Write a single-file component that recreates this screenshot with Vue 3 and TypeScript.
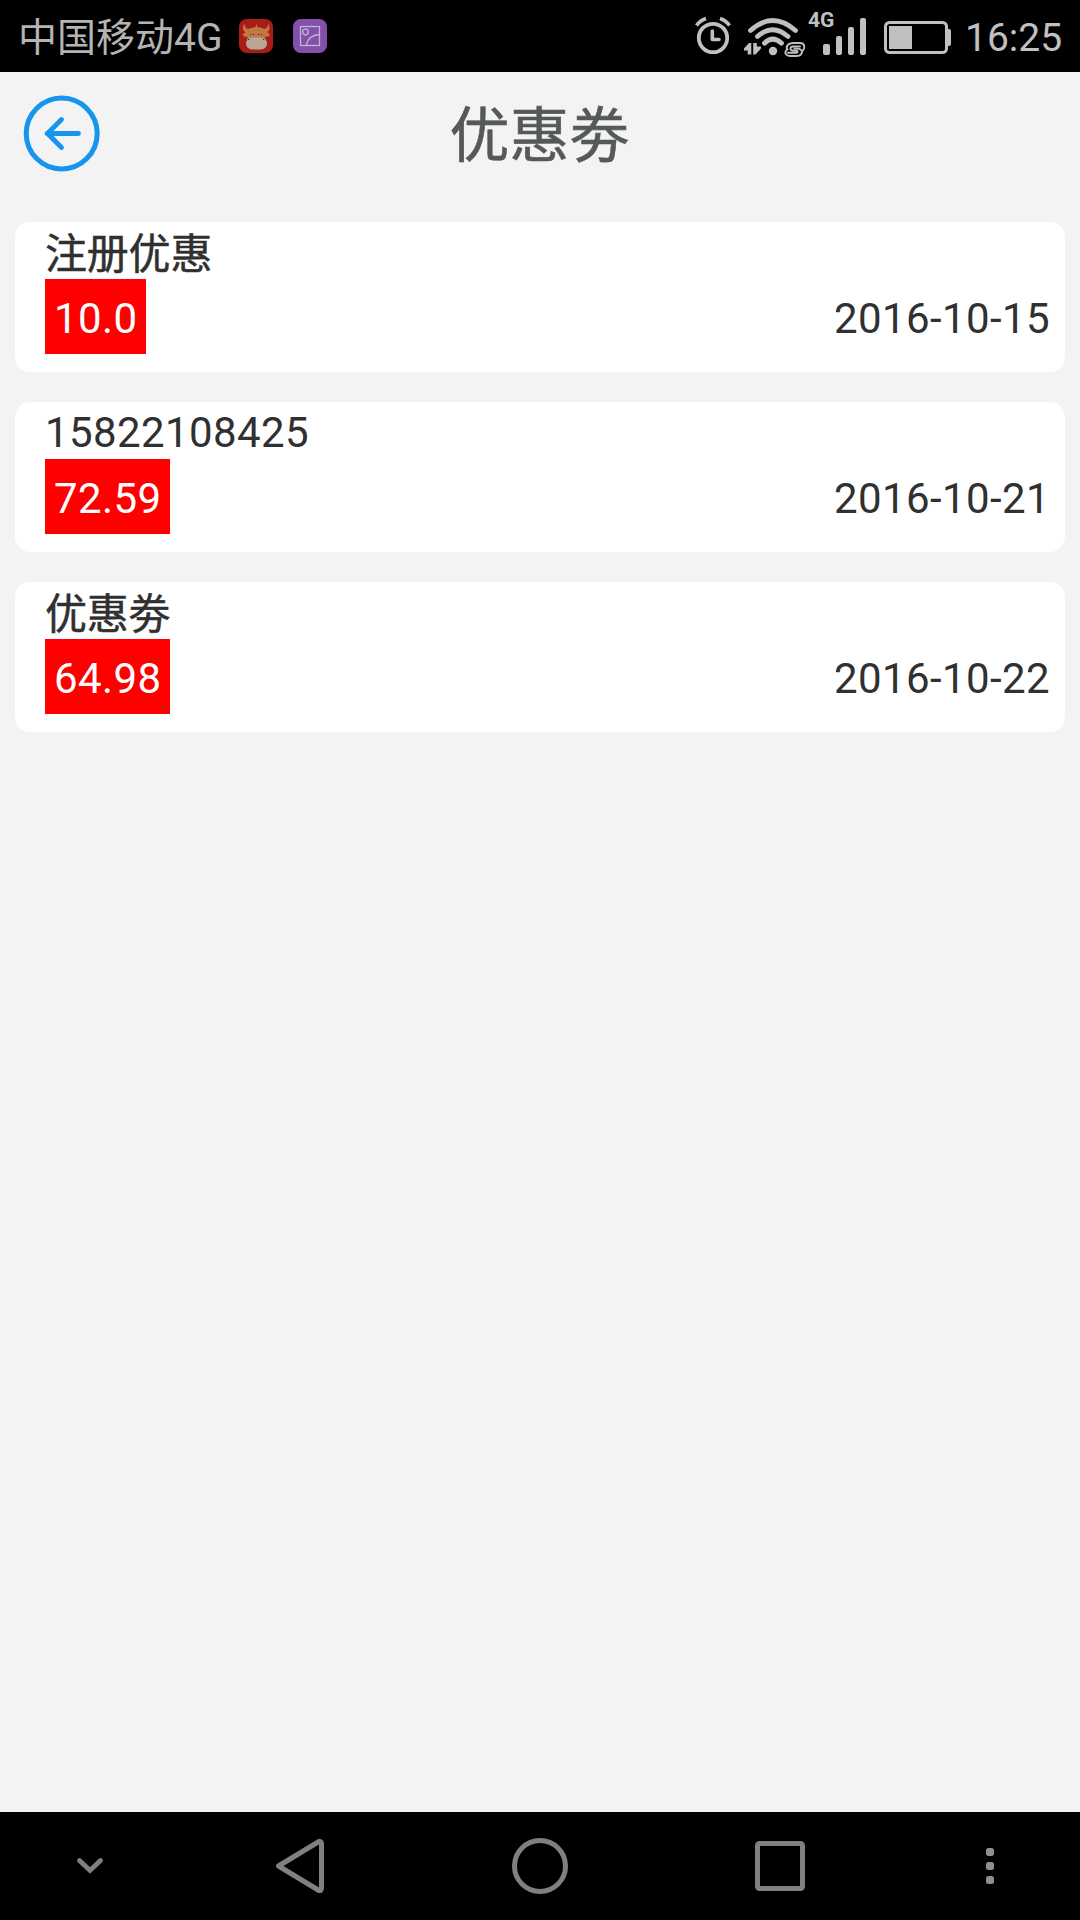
<script setup lang="ts">
interface Coupon {
  title: string
  amount: string
  date: string
}

const coupons: Coupon[] = [
  { title: '注册优惠', amount: '10.0', date: '2016-10-15' },
  { title: '15822108425', amount: '72.59', date: '2016-10-21' },
  { title: '优惠劵', amount: '64.98', date: '2016-10-22' },
]

const isNumeric = (text: string) => /^\d+$/.test(text)
</script>

<template>
  <div class="screen">
    <div class="status">
      <span class="carrier">中国移动4G</span>
      <svg class="app-icon" viewBox="0 0 34 34">
        <rect width="34" height="34" rx="8" fill="#a91d17" />
        <g fill="#c27842">
          <path d="M5.5 4.500C2.500 9 4 13.500 9 14L12 10C7 10.500 5.500 8 5.500 4.500ZM29 4.500C32 9 30.500 13.500 25.500 14L22.500 10C27.500 10.500 29 8 29 4.500Z" />
          <path d="M8 12C9 9 14 8.500 16.500 8L17.300 5L18.500 8C21 8.500 26 9 27 12L31 15.500C29.500 18 28 18 26 17.500L26.500 22H8L8.500 17.500C6.500 18 5 18 3.500 15.500Z" />
        </g>
        <rect x="7" y="18.500" width="21" height="12" rx="6" fill="#b8a797" />
        <path d="M11 15.500h1.300M14 15.500h1.300M19 15.500h1.300M22 15.500h1.300M9 20.500h1.200M24 20.500h1.200" stroke="#4a2c1c" stroke-width="1.200" />
      </svg>
      <svg class="app-icon second" viewBox="0 0 34 34">
        <rect width="34" height="34" rx="8" fill="#8350ab" />
        <g fill="none" stroke="#c4b3d2" stroke-width="1.300">
          <rect x="7.500" y="7.500" width="19" height="19" />
          <circle cx="12.500" cy="13" r="2.800" />
          <path d="M13.500 26C14.500 20 19 16 26.500 15.500" />
        </g>
      </svg>
      <div class="spacer"></div>
      <svg class="alarm" width="37" height="72" viewBox="0 0 37 72">
        <g fill="none" stroke="#c0c0c0">
          <circle cx="18" cy="38" r="14.200" stroke-width="3.800" />
          <path d="M17.300 31V39.500H24" stroke-width="3.600" stroke-linejoin="round" stroke-linecap="round" />
          <path d="M1.500 25.500Q5 20.500 11 18.500M25 18.500Q31 20.500 34.500 25.500" stroke-width="3.600" />
        </g>
      </svg>
      <svg class="wifi" width="63" height="72" viewBox="0 0 63 72">
        <g fill="none" stroke="#c0c0c0" stroke-width="4.800" stroke-linecap="round">
          <path d="M7.500 30.500Q29.500 10.500 52.500 30.500" />
          <path d="M14.500 36.500Q29.500 23 45 36.500" />
          <path d="M21.500 43.200Q29.500 35 38.500 43.200" />
        </g>
        <circle cx="30" cy="51" r="4.200" fill="#c0c0c0" />
        <path d="M1 48.500L6 43H8.300V54.500H4.700V50.500H1ZM10.200 43H13.800V46.500H18V48.500L12.500 54.500H10.200Z" fill="#c0c0c0" />
        <!-- linked-loop badge at the foot of the wifi arcs -->
        <g fill="none" stroke="#c0c0c0" stroke-width="1.900" stroke-linecap="round">
          <path d="M57 46.500H50.500C46.500 46.500 46.500 50.500 50 50.500H52C55.500 50.500 55 52.800 52.500 52.800H45" />
          <path d="M60 50.500C62.500 47 61.500 43 57 43H50.500C44.500 43 42.500 47 44.500 49.500" />
          <path d="M43.500 50C41 53 43 56 47 56H53C59.500 56 60 51 57.500 49.500C56 48.500 54 48.800 51.500 48.500" />
        </g>
      </svg>
      <div class="signal">
        <span class="net">4G</span>
        <svg width="44" height="72" viewBox="0 0 44 72" fill="#c0c0c0">
          <rect x="0" y="44" width="7" height="11" rx="2" />
          <rect x="13" y="36" width="6" height="19" rx="2" />
          <rect x="25" y="27" width="6" height="28" rx="2" />
          <rect x="37" y="18" width="6" height="37" rx="2" />
        </svg>
      </div>
      <svg class="battery" width="67" height="72" viewBox="0 0 67 72">
        <rect x="1.500" y="22.500" width="61" height="30" rx="4" fill="none" stroke="#c0c0c0" stroke-width="3" />
        <path d="M64 29H65Q67 29 67 31V44Q67 46 65 46H64Z" fill="#c0c0c0" />
        <rect x="5" y="26" width="23" height="23" fill="#c0c0c0" />
      </svg>
      <span class="time">16:25</span>
    </div>

    <header class="header">
      <svg class="back" width="78" height="78" viewBox="0 0 78 78" fill="none" stroke="#1595ee">
        <circle cx="38.700" cy="38.500" r="35.500" stroke-width="5" />
        <path d="M55.500 38.500H24M38.500 24.500L24.500 38.500L38.500 52.500" stroke-width="4.800" stroke-linecap="round" stroke-linejoin="round" />
      </svg>
      <h1 class="title">优惠劵</h1>
    </header>

    <main class="list">
      <section v-for="coupon in coupons" :key="coupon.date" class="card">
        <p :class="['name', { numeric: isNumeric(coupon.title) }]">{{ coupon.title }}</p>
        <div class="row">
          <span class="amount">{{ coupon.amount }}</span>
          <span class="date">{{ coupon.date }}</span>
        </div>
      </section>
    </main>

    <nav class="nav">
      <svg width="180" height="108" viewBox="0 0 180 108">
        <path d="M79.500 48.500L90 58.500L100.500 48.500" fill="none" stroke="#808080" stroke-width="4.800" stroke-linecap="round" />
      </svg>
      <svg width="240" height="108" viewBox="0 0 240 108">
        <path d="M139 29.500L98.500 54L139 78.500Q141.500 79 141.500 76V32Q141.500 29 139 29.500Z" fill="none" stroke="#808080" stroke-width="5" stroke-linejoin="round" />
      </svg>
      <svg width="240" height="108" viewBox="0 0 240 108">
        <circle cx="120" cy="54" r="25.500" fill="none" stroke="#808080" stroke-width="5" />
      </svg>
      <svg width="240" height="108" viewBox="0 0 240 108">
        <rect x="97.500" y="31.500" width="45" height="45" rx="2" fill="none" stroke="#808080" stroke-width="5" />
      </svg>
      <svg width="180" height="108" viewBox="0 0 180 108" fill="#8f8f8f">
        <rect x="86" y="36" width="8" height="8" rx="2.500" />
        <rect x="86" y="50" width="8" height="8" rx="2.500" />
        <rect x="86" y="64" width="8" height="8" rx="2.500" />
      </svg>
    </nav>
  </div>
</template>

<style>
body {
  margin: 0;
  background: #f3f3f3;
}
</style>

<style scoped>
.screen {
  display: flex;
  flex-direction: column;
  width: 1080px;
  height: 1920px;
  background: #f3f3f3;
  font-family: Roboto, 'Noto Sans CJK SC', sans-serif;
  overflow: hidden;
}

.screen svg {
  display: block;
  flex-shrink: 0;
}

.status {
  display: flex;
  align-items: center;
  height: 72px;
  padding: 0 19px 0 18px;
  background: #000;
  color: #b4b4b4;
  font-size: 39px;
  line-height: 72px;
  white-space: nowrap;
}

.carrier {
  width: 221px;
  padding-top: 4px;
}

.app-icon {
  width: 34px;
  height: 34px;
}

.second {
  margin-left: 20px;
}

.spacer {
  flex: 1;
}

.wifi {
  margin-left: 11px;
}

.signal {
  display: flex;
  width: 59px;
  margin-left: 2px;
}

.net {
  width: 15px;
  padding-top: 9px;
  color: #c0c0c0;
  font-size: 21px;
  font-weight: 700;
  line-height: 22px;
}

.battery {
  margin-left: 17px;
}

.time {
  width: 96px;
  margin-left: 14px;
  padding-top: 4px;
  color: #c0c0c0;
}

.header {
  display: grid;
  grid-template-columns: 100px 1fr 100px;
  align-items: center;
  height: 123px;
  padding: 0 23px;
}

.title {
  margin: 0;
  padding: 6px 1px 0 0;
  color: #555957;
  font-size: 60px;
  font-weight: 400;
  line-height: 80px;
  text-align: center;
  -webkit-text-stroke: 0.6px #555957;
}

.list {
  display: flex;
  flex: 1;
  flex-direction: column;
  gap: 30px;
  padding: 27px 15px 0;
}

.card {
  box-sizing: border-box;
  height: 150px;
  padding: 0 15px 0 30px;
  border-radius: 15px;
  background: #fff;
  color: #303030;
  font-size: 42px;
  letter-spacing: 0.4px;
}

.name {
  height: 57px;
  margin: 0;
  letter-spacing: -0.2px;
  line-height: 65px;
  -webkit-text-stroke: 0.5px #303030;
}

.name.numeric {
  letter-spacing: 0.4px;
  line-height: 61px;
  -webkit-text-stroke: 0;
}

.row {
  display: flex;
  align-items: center;
  justify-content: space-between;
  height: 75px;
  line-height: 79px;
}

.amount {
  height: 75px;
  padding: 0 8px 0 9px;
  background: #f00;
  color: #fff;
}

.date {
  height: 75px;
}

.nav {
  display: flex;
  height: 108px;
  background: #000;
}
</style>
